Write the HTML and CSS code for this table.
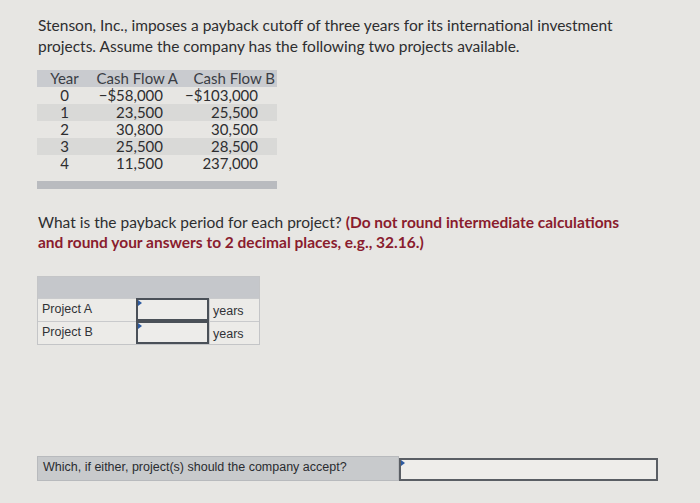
FILE: index.html
```html
<!DOCTYPE html>
<html>
<head>
<meta charset="utf-8">
<link rel="stylesheet" href="styles.css">
</head>
<body>
<div class="page">
  <p class="intro">Stenson, Inc., imposes a payback cutoff of three years for its international investment projects. Assume the company has the following two projects available.</p>

  <div class="cf">
    <div class="cf-row cf-head">
      <span class="c-year">Year</span><span class="c-a">Cash Flow A</span><span class="c-b">Cash Flow B</span>
    </div>
    <div class="cf-row"><span class="c-year">0</span><span class="c-a num">&minus;$58,000</span><span class="c-b num">&minus;$103,000</span></div>
    <div class="cf-row shade"><span class="c-year">1</span><span class="c-a num">23,500</span><span class="c-b num">25,500</span></div>
    <div class="cf-row"><span class="c-year">2</span><span class="c-a num">30,800</span><span class="c-b num">30,500</span></div>
    <div class="cf-row shade"><span class="c-year">3</span><span class="c-a num">25,500</span><span class="c-b num">28,500</span></div>
    <div class="cf-row"><span class="c-year">4</span><span class="c-a num">11,500</span><span class="c-b num">237,000</span></div>
    <div class="cf-foot"></div>
  </div>

  <p class="question">What is the payback period for each project? <strong class="hint">(Do not round intermediate calculations and round your answers to 2 decimal places, e.g., 32.16.)</strong></p>

  <div class="ans">
    <div class="ans-head"></div>
    <div class="ans-row">
      <span class="ans-label">Project A</span>
      <span class="ans-input"><span class="caret"></span></span>
      <span class="ans-unit">years</span>
    </div>
    <div class="ans-row">
      <span class="ans-label">Project B</span>
      <span class="ans-input"><span class="caret"></span></span>
      <span class="ans-unit">years</span>
    </div>
  </div>

  <div class="accept">
    <span class="accept-label">Which, if either, project(s) should the company accept?</span>
    <span class="accept-input"><span class="caret"></span></span>
  </div>
</div>
</body>
</html>
```

FILE: styles.css
```css
html, body {
  margin: 0;
  padding: 0;
}
body {
  background: #e7e6e3;
  width: 700px;
  height: 503px;
  overflow: hidden;
  font-family: Lato, "Open Sans", sans-serif;
  color: #2e2e30;
}
.page {
  padding: 15px 0 0 38px;
}
.intro {
  margin: 0;
  width: 600px;
  font-size: 15.5px;
  line-height: 21px;
}
.cf {
  margin-top: 13px;
  margin-left: -1px;
  width: 240px;
  font-size: 15px;
}
.cf-row {
  display: grid;
  grid-template-columns: 55px 88px 97px;
  height: 17px;
  line-height: 17px;
}
.cf-head {
  background: #c9cbcf;
  color: #3a3d44;
}
.shade {
  background: #d9d9d7;
}
.c-year {
  text-align: center;
}
.c-a, .c-b {
  text-align: right;
  padding-right: 2px;
}
.c-a.num {
  padding-right: 17px;
}
.c-b.num {
  padding-right: 19px;
}
.cf-foot {
  margin-top: 9px;
  height: 8px;
  background: #b9bbbf;
}
.question {
  margin: 23px 0 0;
  width: 600px;
  font-size: 15.5px;
  line-height: 20px;
}
.hint {
  color: #8a1c2e;
  font-weight: 700;
}
.ans {
  margin-top: 24px;
  margin-left: -1px;
  width: 221px;
  border: 1px solid #c4c5c7;
  font-family: "Liberation Sans", Arial, sans-serif;
  font-size: 12.5px;
  color: #303236;
}
.ans-head {
  height: 21px;
  background: #c5c7cb;
}
.ans-row {
  display: grid;
  grid-template-columns: 98px 73px 1fr;
  height: 22px;
  border-top: 1px solid #c9cacc;
  background: #ecebe8;
}
.ans-label {
  padding: 3px 0 0 4px;
}
.ans-unit {
  padding: 5px 0 0 3px;
  border-left: 1px solid #c9cacc;
}
.ans-input {
  position: relative;
  border: 2px solid #4a5058;
  background: #edecea;
  margin-top: -1px;
}
.caret {
  position: absolute;
  left: 0;
  top: 0;
  width: 0;
  height: 0;
  border-top: 3px solid transparent;
  border-bottom: 3px solid transparent;
  border-left: 4px solid #2c5aa0;
}
.accept {
  margin-top: 111px;
  margin-left: -1px;
  display: flex;
  align-items: flex-start;
  font-family: "Liberation Sans", Arial, sans-serif;
  font-size: 12.5px;
  color: #2a2c30;
}
.accept-label {
  width: 355px;
  height: 23px;
  line-height: 21px;
  padding-left: 5px;
  background: #c8cacc;
  border: 1px solid #b8babd;
}
.accept-input {
  position: relative;
  margin-top: 2px;
  width: 255px;
  height: 19px;
  border: 2px solid #5a5e64;
  background: #eeedea;
}
```
